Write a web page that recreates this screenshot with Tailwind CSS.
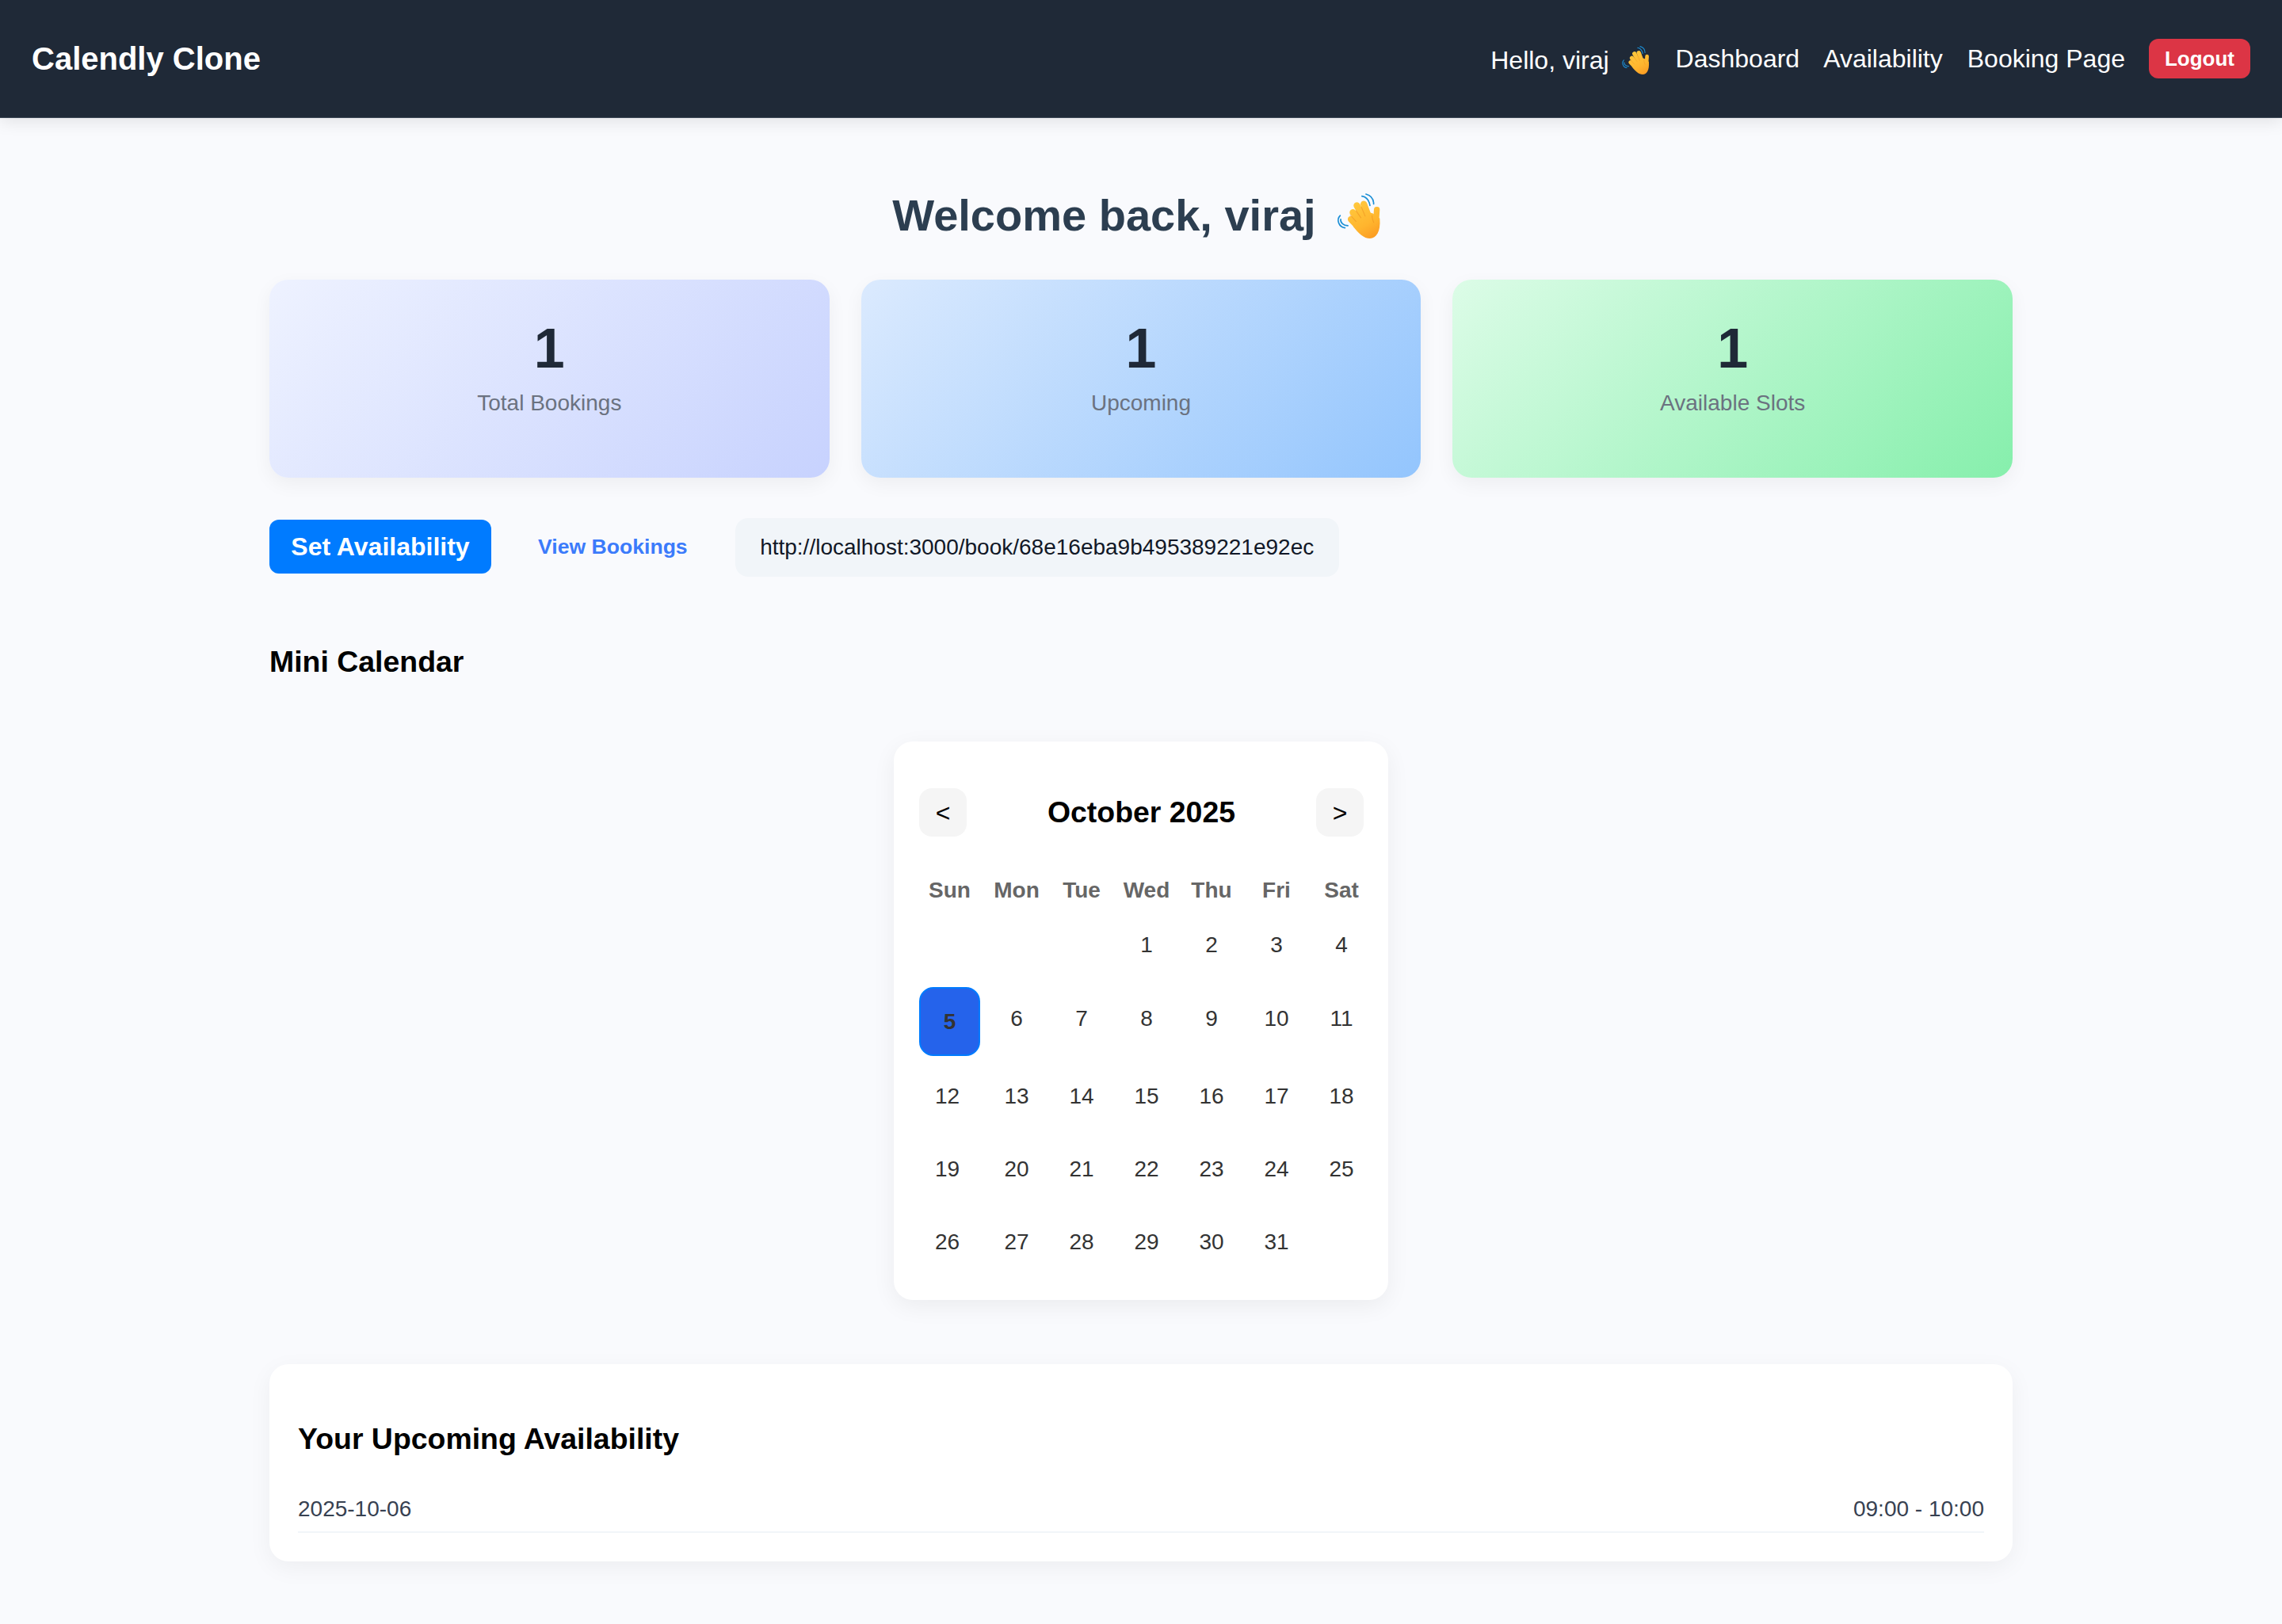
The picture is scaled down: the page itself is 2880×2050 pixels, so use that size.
<!DOCTYPE html>
<html lang="en">

<head>
  <meta charset="UTF-8" />
  <meta name="viewport" content="width=device-width, initial-scale=1.0" />
  <title>Calendly Clone</title>
  <script src="https://cdn.jsdelivr.net/npm/@tailwindcss/browser@4"></script>
</head>

<body class="bg-[#f9fafd] font-['Liberation_Sans',Arial,sans-serif] min-h-[2050px]">

  <!-- waving hand, used twice -->
  <svg class="absolute w-0 h-0">
    <defs>
      <linearGradient id="handFill" gradientUnits="userSpaceOnUse" x1="100" y1="60" x2="175" y2="190">
        <stop offset="0" stop-color="#ffc73c" />
        <stop offset="0.6" stop-color="#ffb52e" />
        <stop offset="1" stop-color="#fb9a22" />
      </linearGradient>
    </defs>
    <symbol id="hand" viewBox="30 20 170 170">
      <g fill="none" stroke-linecap="round">
        <path d="M128 31 C146 34 155 46 158 66" stroke="#1c8fd6" stroke-width="5" />
        <path d="M143 23 C162 28 172 42 172 60" stroke="#1c8fd6" stroke-width="5" />
        <path d="M48 118 C46 130 58 141 75 142" stroke="#1c8fd6" stroke-width="5" />
        <path d="M46 104 C30 120 42 148 64 150" stroke="#1c8fd6" stroke-width="5" />
        <g stroke="url(#handFill)">
          <path d="M87 118 L130 162" stroke-width="25" />
          <path d="M94 92 L136 142" stroke-width="25" />
          <path d="M109 66 L142 126" stroke-width="25" />
          <path d="M135 61 L158 122" stroke-width="25" />
          <path d="M184 82 L180 140" stroke-width="22" />
        </g>
      </g>
      <path d="M95 125 L125 85 L168 95 L195 115 C199 165 182 190 158 190 C135 190 115 170 95 145 Z" fill="url(#handFill)" />
      <g fill="none" stroke="#ee9020" stroke-width="3" stroke-linecap="round" opacity="0.6">
        <path d="M84 102 L106 126" />
        <path d="M106 86 L124 112" />
        <path d="M126 72 L140 106" />
        <path d="M166 104 C166 116 170 122 172 130" />
      </g>
    </symbol>
  </svg>

  <!-- Navbar -->
  <nav class="h-[149px] bg-[#1f2937] border-b border-[#3d4856] shadow-[0_4px_20px_rgba(0,0,0,0.1)] flex items-center justify-between pl-[40px] pr-[40px] text-white">
    <div class="text-[40px] font-bold leading-none">Calendly Clone</div>
    <div class="flex items-center text-[32px]">
      <span class="mt-[3px]">Hello, viraj</span>
      <svg class="w-[36px] h-[36px] ml-[15px] mt-[4px]"><use href="#hand" /></svg>
      <a class="ml-[33px]">Dashboard</a>
      <a class="ml-[30px]">Availability</a>
      <a class="ml-[31px]">Booking Page</a>
      <button class="ml-[30px] w-[128px] h-[50px] rounded-[12px] bg-[#dc3545] text-[26px] font-bold text-white">Logout</button>
    </div>
  </nav>

  <main class="w-[2200px] mx-auto">
    <h1 class="mt-[91px] h-[64px] flex items-center justify-center text-[56px] font-bold text-[#2c3e50]">
      <span>Welcome back, viraj</span>
      <svg class="w-[57px] h-[57px] ml-[25px] mr-[11px]"><use href="#hand" /></svg>
    </h1>

    <!-- Stats -->
    <div class="mt-[49px] grid grid-cols-3 gap-[40px]">
      <div class="h-[250px] rounded-[24px] pt-[52px] text-center bg-[linear-gradient(135deg,#eef2ff,#c7d2fe)] shadow-[0_8px_24px_rgba(0,0,0,0.05)]">
        <div class="text-[70px] leading-[70px] font-bold text-[#1f2937]">1</div>
        <div class="mt-[17px] text-[28px] leading-[34px] text-[#6b7280]">Total Bookings</div>
      </div>
      <div class="h-[250px] rounded-[24px] pt-[52px] text-center bg-[linear-gradient(135deg,#dbeafe,#93c5fd)] shadow-[0_8px_24px_rgba(0,0,0,0.05)]">
        <div class="text-[70px] leading-[70px] font-bold text-[#1f2937]">1</div>
        <div class="mt-[17px] text-[28px] leading-[34px] text-[#6b7280]">Upcoming</div>
      </div>
      <div class="h-[250px] rounded-[24px] pt-[52px] text-center bg-[linear-gradient(135deg,#dcfce7,#86efac)] shadow-[0_8px_24px_rgba(0,0,0,0.05)]">
        <div class="text-[70px] leading-[70px] font-bold text-[#1f2937]">1</div>
        <div class="mt-[17px] text-[28px] leading-[34px] text-[#6b7280]">Available Slots</div>
      </div>
    </div>

    <!-- Actions -->
    <div class="mt-[51px] h-[74px] flex items-center">
      <button class="w-[280px] h-[68px] mb-[3px] rounded-[12px] bg-[#007bff] text-white text-[32px] font-bold">Set Availability</button>
      <a class="ml-[59px] text-[26.6px] font-bold text-[#3b7bfb]">View Bookings</a>
      <div class="ml-[60px] w-[762px] h-[74px] rounded-[16px] bg-[#f1f5f9] flex items-center justify-center text-[28px] text-[#111827]">http://localhost:3000/book/68e16eba9b495389221e92ec</div>
    </div>

    <h3 class="mt-[85px] text-[37.44px] leading-[44px] font-bold text-black">Mini Calendar</h3>

    <!-- Calendar -->
    <div class="mt-[79px] mx-auto w-[624px] h-[705px] bg-white rounded-[24px] shadow-[0_8px_30px_rgba(0,0,0,0.06)] pl-[32px] pr-[23px] pt-[59px]">
      <div class="w-[561px] flex items-center justify-between">
        <button class="w-[60px] h-[61px] rounded-[16px] bg-[#f5f5f5] text-[32px] text-black">&lt;</button>
        <h3 class="text-[37.44px] font-bold text-black">October 2025</h3>
        <button class="w-[60px] h-[61px] rounded-[16px] bg-[#f5f5f5] text-[32px] text-black">&gt;</button>
      </div>

      <div class="mt-[48px] grid grid-cols-[77px_repeat(6,72px)] grid-rows-[40px_82px_87px_82px_82px_82px] gap-[10px] text-[28px] text-[#333]">
        <div class="flex items-center justify-center font-bold text-[#666]">Sun</div>
        <div class="flex items-center justify-center font-bold text-[#666]">Mon</div>
        <div class="flex items-center justify-center font-bold text-[#666]">Tue</div>
        <div class="flex items-center justify-center font-bold text-[#666]">Wed</div>
        <div class="flex items-center justify-center font-bold text-[#666]">Thu</div>
        <div class="flex items-center justify-center font-bold text-[#666]">Fri</div>
        <div class="flex items-center justify-center font-bold text-[#666]">Sat</div>

        <div></div>
        <div></div>
        <div></div>
        <div class="flex items-center justify-center pb-1">1</div>
        <div class="flex items-center justify-center pb-1">2</div>
        <div class="flex items-center justify-center pb-1">3</div>
        <div class="flex items-center justify-center pb-1">4</div>

        <div class="flex items-center justify-center rounded-[18px] bg-[#2563eb] border-2 border-[#007bff] font-bold">5</div>
        <div class="flex items-center justify-center pb-[7px]">6</div>
        <div class="flex items-center justify-center pb-[7px]">7</div>
        <div class="flex items-center justify-center pb-[7px]">8</div>
        <div class="flex items-center justify-center pb-[7px]">9</div>
        <div class="flex items-center justify-center pb-[7px]">10</div>
        <div class="flex items-center justify-center pb-[7px]">11</div>

        <div class="flex items-center justify-center pr-1.5">12</div>
        <div class="flex items-center justify-center">13</div>
        <div class="flex items-center justify-center">14</div>
        <div class="flex items-center justify-center">15</div>
        <div class="flex items-center justify-center">16</div>
        <div class="flex items-center justify-center">17</div>
        <div class="flex items-center justify-center">18</div>

        <div class="flex items-center justify-center pr-1.5">19</div>
        <div class="flex items-center justify-center">20</div>
        <div class="flex items-center justify-center">21</div>
        <div class="flex items-center justify-center">22</div>
        <div class="flex items-center justify-center">23</div>
        <div class="flex items-center justify-center">24</div>
        <div class="flex items-center justify-center">25</div>

        <div class="flex items-center justify-center pr-1.5">26</div>
        <div class="flex items-center justify-center">27</div>
        <div class="flex items-center justify-center">28</div>
        <div class="flex items-center justify-center">29</div>
        <div class="flex items-center justify-center">30</div>
        <div class="flex items-center justify-center">31</div>
        <div></div>
      </div>
    </div>

    <!-- Upcoming availability -->
    <div class="mt-[81px] h-[249px] bg-white rounded-[24px] shadow-[0_8px_30px_rgba(0,0,0,0.05)] px-[36px] pt-[72px]">
      <h3 class="text-[37.44px] leading-[44px] font-bold text-black">Your Upcoming Availability</h3>
      <div class="mt-[50px] pb-[11px] border-b-2 border-[#f1f5f9] flex justify-between text-[28px] leading-[34px] text-[#374151]">
        <span>2025-10-06</span>
        <span>09:00 - 10:00</span>
      </div>
    </div>
  </main>

</body>

</html>
